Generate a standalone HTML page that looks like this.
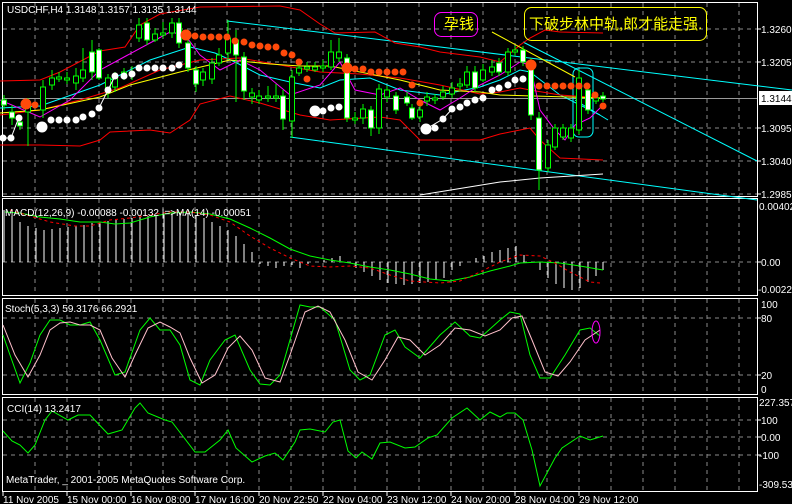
<!DOCTYPE html>
<html><head><meta charset="utf-8"><style>
html,body{margin:0;padding:0;background:#000;}
svg{display:block;}
text{font-family:"Liberation Sans","Noto Sans CJK SC",sans-serif;font-size:10px;fill:#fff;}
</style></head><body>
<svg width="792" height="504" viewBox="0 0 792 504" xmlns="http://www.w3.org/2000/svg">
<rect width="792" height="504" fill="#000"/>
<g stroke="#8a8a8a" stroke-width="1" stroke-dasharray="4,4">
<path d="M35 3V196M67 3V196M99 3V196M131 3V196M163 3V196M195 3V196M227 3V196M259 3V196M291 3V196M323 3V196M355 3V196M387 3V196M419 3V196M451 3V196M483 3V196M515 3V196M547 3V196M579 3V196M611 3V196M643 3V196M675 3V196M707 3V196M739 3V196"/>
<path d="M35 199V295M67 199V295M99 199V295M131 199V295M163 199V295M195 199V295M227 199V295M259 199V295M291 199V295M323 199V295M355 199V295M387 199V295M419 199V295M451 199V295M483 199V295M515 199V295M547 199V295M579 199V295M611 199V295M643 199V295M675 199V295M707 199V295M739 199V295"/>
<path d="M35 299V394M67 299V394M99 299V394M131 299V394M163 299V394M195 299V394M227 299V394M259 299V394M291 299V394M323 299V394M355 299V394M387 299V394M419 299V394M451 299V394M483 299V394M515 299V394M547 299V394M579 299V394M611 299V394M643 299V394M675 299V394M707 299V394M739 299V394"/>
<path d="M35 398V491M67 398V491M99 398V491M131 398V491M163 398V491M195 398V491M227 398V491M259 398V491M291 398V491M323 398V491M355 398V491M387 398V491M419 398V491M451 398V491M483 398V491M515 398V491M547 398V491M579 398V491M611 398V491M643 398V491M675 398V491M707 398V491M739 398V491"/>
<path d="M3 29H757M3 62H757M3 128H757M3 161H757M3 194H757"/>
<path d="M3 262H757M3 318H757M3 375H757M3 420H757M3 437H757M3 455H757"/>
</g>
<line x1="3" y1="98.5" x2="757" y2="98.5" stroke="#9a9a9a"/>
<g fill="none" stroke="#fff">
<rect x="2.5" y="2.5" width="755" height="194"/>
<rect x="2.5" y="198.5" width="755" height="97"/>
<rect x="2.5" y="298.5" width="755" height="96"/>
<rect x="2.5" y="397.5" width="755" height="94"/>
</g>
<g stroke="#00ffff" fill="none">
<path d="M227 21L792 90"/>
<path d="M290 137L757 200"/>
<path d="M523 42L757 161"/>
<path d="M575 100L608 120"/>
<rect x="573" y="68" width="20" height="69" rx="6"/>
<polyline points="0,108 40,106 100,85 150,60 190,47 215,53 235,62 260,75 290,82 320,88 340,80 370,78 400,90 440,95 480,87 500,80 520,70 530,72 560,95 600,115"/>
</g>
<g stroke="#ff0000" fill="none">
<polyline points="0,81 40,80 60,72 100,51 125,47 140,25 160,14 200,7 280,6 300,10 320,24 335,33 375,32 395,43 420,47 440,52 480,57 500,62 520,45 530,38 545,30 560,32 603,33"/>
<polyline points="0,115 40,110 80,100 120,88 160,70 200,60 240,58 280,65 320,72 360,74 400,78 440,85 480,94 500,92 520,88 530,90 560,95 603,98"/>
<polyline points="0,145 40,145 80,146 100,140 110,132 150,130 170,133 190,120 200,104 230,96 260,103 300,115 330,120 380,117 400,120 420,140 480,140 500,134 530,128 540,140 560,158 603,160"/>
</g>
<polyline fill="none" stroke="#ffff00" points="0,113 40,110 100,97 130,85 180,72 230,60 270,64 300,66 330,66 400,80 440,90 480,92 500,95 603,98"/>
<path d="M492 32L575 77" stroke="#ffff00"/>
<polyline fill="none" stroke="#ff00ff" points="0,100 40,117 70,100 100,70 150,43 170,32 185,35 200,55 220,70 240,60 260,70 290,95 320,85 340,62 355,90 380,95 400,88 420,100 440,110 460,98 480,85 500,75 520,62 530,65 540,110 555,130 565,140 575,125 590,118 603,105"/>
<polyline fill="none" stroke="#fff" points="420,195 500,182 540,178 603,174"/>
<g stroke="#00ff00" stroke-width="1">
<path d="M4 95V110M12 105V125M20 118V130M28 98V146M43 80V118M52 70V90M59 72V82M67 72V84M76 68V90M83 48V82M92 40V80M99 48V80M108 74V98M115 72V92M124 68V80M132 66V80M139 18V42M147 18V45M155 28V42M163 22V38M172 18V38M179 18V48M188 40V72M196 66V92M203 68V86M212 58V84M219 48V66M228 20V60M236 30V102M244 52V100M252 88V104M259 90V104M268 86V102M276 84V102M283 90V130M292 70V138M299 62V76M307 62V72M315 62V72M323 60V72M331 40V70M339 38V62M347 54V122M355 112V124M363 104V124M371 106V136M379 84V134M387 86V102M396 92V114M407 92V106M412 104V120M420 104V122M427 92V106M435 94V104M443 86V100M452 82V98M460 78V90M467 66V88M475 66V92M483 64V82M492 60V76M499 58V76M508 48V76M515 46V56M523 46V66M531 58V120M539 112V190M548 140V172M555 124V150M563 124V140M571 124V142M579 70V134M588 86V114M596 94V104M603 92V102"/>
<g fill="#000">
<rect x="25.5" y="104" width="5" height="8"/><rect x="40.5" y="87" width="5" height="23"/><rect x="49.5" y="78" width="5" height="7"/><rect x="56.5" y="77" width="5" height="2"/><rect x="64.5" y="78" width="5" height="2"/><rect x="73.5" y="76" width="5" height="7"/><rect x="80.5" y="70" width="5" height="8"/><rect x="105.5" y="78" width="5" height="14"/><rect x="112.5" y="78" width="5" height="9"/><rect x="121.5" y="72" width="5" height="2"/><rect x="136.5" y="25" width="5" height="13"/><rect x="152.5" y="34" width="5" height="6"/><rect x="160.5" y="33" width="5" height="2"/><rect x="169.5" y="23" width="5" height="10"/><rect x="200.5" y="72" width="5" height="8"/><rect x="209.5" y="63" width="5" height="16"/><rect x="216.5" y="55" width="5" height="8"/><rect x="225.5" y="38" width="5" height="15"/><rect x="249.5" y="93" width="5" height="4"/><rect x="256.5" y="96" width="5" height="4"/><rect x="265.5" y="96" width="5" height="2"/><rect x="273.5" y="96" width="5" height="2"/><rect x="289.5" y="77" width="5" height="44"/><rect x="296.5" y="68" width="5" height="5"/><rect x="304.5" y="67" width="5" height="2"/><rect x="312.5" y="67" width="5" height="3"/><rect x="320.5" y="66" width="5" height="2"/><rect x="328.5" y="52" width="5" height="15"/><rect x="336.5" y="52" width="5" height="6"/><rect x="352.5" y="118" width="5" height="2"/><rect x="360.5" y="109" width="5" height="9"/><rect x="376.5" y="89" width="5" height="39"/><rect x="384.5" y="90" width="5" height="7"/><rect x="417.5" y="110" width="5" height="7"/><rect x="424.5" y="97" width="5" height="4"/><rect x="432.5" y="98" width="5" height="2"/><rect x="440.5" y="92" width="5" height="5"/><rect x="449.5" y="88" width="5" height="6"/><rect x="457.5" y="84" width="5" height="2"/><rect x="464.5" y="72" width="5" height="13"/><rect x="480.5" y="70" width="5" height="10"/><rect x="489.5" y="67" width="5" height="5"/><rect x="505.5" y="52" width="5" height="20"/><rect x="512.5" y="50" width="5" height="2"/><rect x="545.5" y="145" width="5" height="23"/><rect x="552.5" y="128" width="5" height="19"/><rect x="560.5" y="128" width="5" height="9"/><rect x="568.5" y="128" width="5" height="10"/><rect x="576.5" y="78" width="5" height="52"/><rect x="593.5" y="98" width="5" height="3"/>
</g>
<g fill="#fff">
<rect x="1.5" y="100" width="5" height="5"/><rect x="9.5" y="112" width="5" height="6"/><rect x="17.5" y="122" width="5" height="4"/><rect x="89.5" y="52" width="5" height="20"/><rect x="96.5" y="50" width="5" height="28"/><rect x="129.5" y="72" width="5" height="2"/><rect x="144.5" y="23" width="5" height="17"/><rect x="176.5" y="23" width="5" height="20"/><rect x="185.5" y="43" width="5" height="25"/><rect x="193.5" y="70" width="5" height="14"/><rect x="233.5" y="40" width="5" height="15"/><rect x="241.5" y="57" width="5" height="34"/><rect x="280.5" y="96" width="5" height="23"/><rect x="344.5" y="58" width="5" height="60"/><rect x="368.5" y="110" width="5" height="18"/><rect x="393.5" y="96" width="5" height="14"/><rect x="404.5" y="97" width="5" height="6"/><rect x="409.5" y="108" width="5" height="10"/><rect x="472.5" y="72" width="5" height="16"/><rect x="496.5" y="63" width="5" height="9"/><rect x="520.5" y="50" width="5" height="12"/><rect x="528.5" y="62" width="5" height="53"/><rect x="536.5" y="118" width="5" height="52"/><rect x="585.5" y="90" width="5" height="20"/><rect x="600.5" y="96" width="5" height="3"/>
</g>
</g>
<g fill="#ff4a0a">
<circle cx="26" cy="104" r="5.5"/><circle cx="35" cy="105" r="3.5"/>
<circle cx="186" cy="35" r="5.5"/><circle cx="195" cy="36" r="3.5"/><circle cx="203" cy="37" r="3.5"/><circle cx="211" cy="37" r="3.5"/><circle cx="219" cy="37" r="3.5"/><circle cx="227" cy="37" r="3.5"/><circle cx="235" cy="41" r="3.5"/><circle cx="244" cy="42" r="3.5"/><circle cx="252" cy="45" r="3.5"/><circle cx="260" cy="46" r="3.5"/><circle cx="268" cy="47" r="3.5"/><circle cx="276" cy="47" r="3.5"/><circle cx="284" cy="53" r="3.5"/><circle cx="292" cy="55" r="3.5"/><circle cx="299" cy="62" r="3.5"/><circle cx="307" cy="79" r="3.5"/>
<circle cx="347" cy="68" r="5.5"/><circle cx="355" cy="69" r="3.5"/><circle cx="363" cy="69" r="3.5"/><circle cx="371" cy="72" r="3.5"/><circle cx="379" cy="72" r="3.5"/><circle cx="387" cy="72" r="3.5"/><circle cx="395" cy="72" r="3.5"/><circle cx="403" cy="72" r="3.5"/><circle cx="412" cy="85" r="3.5"/><circle cx="420" cy="103" r="3.5"/>
<circle cx="531" cy="65" r="5.5"/><circle cx="539" cy="86" r="3.5"/><circle cx="547" cy="86" r="3.5"/><circle cx="555" cy="86" r="3.5"/><circle cx="563" cy="86" r="3.5"/><circle cx="571" cy="86" r="3.5"/><circle cx="579" cy="86" r="3.5"/><circle cx="587" cy="86" r="3.5"/><circle cx="595" cy="95" r="3.5"/><circle cx="603" cy="106" r="3.5"/>
</g>
<polyline fill="none" stroke="#fff" points="3,138 11,138 19,117 20,118"/>
<g fill="#fff">
<circle cx="3" cy="138" r="3.5"/><circle cx="11" cy="138" r="3.5"/><circle cx="19" cy="118" r="3.5"/>
<circle cx="42" cy="127" r="5.5"/><circle cx="51" cy="120" r="3.5"/><circle cx="59" cy="120" r="3.5"/><circle cx="67" cy="120" r="3.5"/><circle cx="76" cy="120" r="3.5"/><circle cx="83" cy="117" r="3.5"/><circle cx="92" cy="114" r="3.5"/><circle cx="99" cy="108" r="3.5"/><circle cx="108" cy="90" r="3.5"/><circle cx="115" cy="76" r="3.5"/><circle cx="124" cy="76" r="3.5"/><circle cx="132" cy="74" r="3.5"/><circle cx="139" cy="68" r="3.5"/><circle cx="147" cy="68" r="3.5"/><circle cx="155" cy="68" r="3.5"/><circle cx="163" cy="68" r="3.5"/><circle cx="172" cy="68" r="3.5"/><circle cx="179" cy="65" r="3.5"/>
<circle cx="315" cy="111" r="5.5"/><circle cx="323" cy="111" r="3.5"/><circle cx="331" cy="108" r="3.5"/><circle cx="339" cy="107" r="3.5"/>
<circle cx="426" cy="129" r="5.5"/><circle cx="435" cy="128" r="3.5"/><circle cx="443" cy="119" r="3.5"/><circle cx="452" cy="109" r="3.5"/><circle cx="460" cy="107" r="3.5"/><circle cx="467" cy="103" r="3.5"/><circle cx="475" cy="100" r="3.5"/><circle cx="483" cy="98" r="3.5"/><circle cx="492" cy="90" r="3.5"/><circle cx="499" cy="88" r="3.5"/><circle cx="508" cy="85" r="3.5"/><circle cx="515" cy="80" r="3.5"/><circle cx="523" cy="79" r="3.5"/>
</g>
<polyline fill="none" stroke="#fff" points="99,108 108,90 115,76"/>
<polyline fill="none" stroke="#fff" points="426,129 443,119 452,109"/>
<rect x="434.5" y="12.5" width="43" height="24" rx="7" fill="none" stroke="#ff00ff"/>
<text x="444" y="29" style="font-size:15px;fill:#ffff00">孕钱</text>
<rect x="524.5" y="7.5" width="182" height="33" rx="7" fill="none" stroke="#ffff00"/>
<text x="529" y="29" style="font-size:15px;fill:#ffff00">下破步林中轨,郎才能走强.</text>
<g stroke="#fff">
<path d="M4 262V210M12 262V216M20 262V222M28 262V226M36 262V228M44 262V230M52 262V229M60 262V228M68 262V227M76 262V226M84 262V225M92 262V223M100 262V222M108 262V221M116 262V220M124 262V219M132 262V218M140 262V217M148 262V216M156 262V215M164 262V214M172 262V213M180 262V212M188 262V213M196 262V215M204 262V218M212 262V222M220 262V226M228 262V230M236 262V236M244 262V244M252 262V252M260 262V264M268 262V266M276 262V268M284 262V266M292 262V265M300 262V268M308 262V264M324 262V260M332 262V258M340 262V256M348 262V262M356 262V268M364 262V272M372 262V276M380 262V280M388 262V283M396 262V284M404 262V285M412 262V284M420 262V283M428 262V282M436 262V280M444 262V278M452 262V270M460 262V266M476 262V258M484 262V256M492 262V252M500 262V250M508 262V248M516 262V246M524 262V255M540 262V270M548 262V278M556 262V284M564 262V288M572 262V290M580 262V288M588 262V282M596 262V276M603 262V270"/>
</g>
<polyline fill="none" stroke="#00ff00" points="5,212 20,213 40,217 60,219 80,222 100,222 115,224 130,223 150,217 170,213 190,212 210,214 230,219 250,228 270,238 290,249 310,256 330,260 350,263 370,267 390,270 410,274 430,279 450,281 470,277 490,271 510,266 520,263 540,262 560,263 580,266 603,270"/>
<polyline fill="none" stroke="#ff0000" stroke-dasharray="3,3" points="10,210 30,216 50,222 75,226 90,226 110,220 130,218 150,215 170,212 190,212 210,215 230,222 250,236 270,248 290,258 310,266 330,267 350,266 370,268 390,275 410,281 440,283 460,281 480,272 500,262 520,255 540,256 555,263 570,272 590,282 600,283"/>
<polyline fill="none" stroke="#00ff00" points="3,335 10,355 20,383 30,363 40,335 50,320 60,320 70,325 80,325 90,322 100,340 115,375 125,372 140,330 150,318 160,330 170,330 180,345 190,380 200,385 210,360 225,340 235,335 250,370 260,384 270,385 280,375 300,305 310,307 320,307 335,320 350,370 360,380 370,375 385,335 395,330 405,347 420,358 440,335 455,322 470,336 480,338 500,320 510,312 520,314 530,355 540,378 550,378 565,355 580,330 590,328 600,336"/>
<polyline fill="none" stroke="#ffc0cb" points="3,325 15,355 28,377 40,355 50,330 60,323 70,322 80,325 90,325 100,330 112,358 125,377 135,355 148,328 160,322 170,327 180,333 190,358 202,383 215,375 228,348 240,336 252,350 265,378 280,382 290,355 305,312 318,306 330,312 345,340 358,372 372,380 385,360 398,337 410,340 425,355 440,345 455,328 470,330 485,336 500,330 512,318 522,316 532,340 545,372 558,376 570,362 585,340 600,330"/>
<ellipse cx="596" cy="332" rx="4" ry="11" fill="none" stroke="#ff00ff"/>
<polyline fill="none" stroke="#00ff00" points="3,431 12,441 20,445 28,453 35,445 45,420 52,411 68,420 78,415 90,415 108,434 122,430 135,408 140,403 148,413 165,420 172,422 195,452 205,452 220,440 228,430 236,448 252,462 265,456 275,453 283,460 295,442 300,430 310,429 325,432 333,422 340,420 348,451 356,458 362,452 372,459 380,443 390,442 405,448 415,447 428,438 437,435 452,418 467,408 480,420 490,412 500,417 507,413 515,413 523,420 532,450 540,486 555,458 562,448 580,436 590,440 603,436"/>
<text x="7" y="13">USDCHF,H4  1.3148 1.3157 1.3135 1.3144</text>
<text x="5" y="216">MACD(12,26,9) -0.00088 -0.00132 |=&gt;MA(14) -0.00051</text>
<text x="5" y="312">Stoch(5,3,3) 59.3176 66.2921</text>
<text x="7" y="412">CCI(14) 13.2417</text>
<text x="6" y="483">MetaTrader, _ 2001-2005 MetaQuotes Software Corp.</text>
<g>
<text x="761" y="33">1.3260</text>
<text x="761" y="66">1.3205</text>
<rect x="759" y="91" width="33" height="14" fill="#fff"/>
<text x="761" y="102" style="fill:#000">1.3144</text>
<text x="761" y="132">1.3095</text>
<text x="761" y="165">1.3040</text>
<text x="761" y="198">1.2985</text>
<text x="759" y="210">0.00402</text>
<text x="761" y="266">0.00</text>
<text x="758" y="293">-0.0022</text>
<text x="761" y="308">100</text>
<text x="761" y="322">80</text>
<text x="761" y="379">20</text>
<text x="761" y="393">0</text>
<text x="759" y="406">227.357</text>
<text x="761" y="424">100</text>
<text x="761" y="441">0.00</text>
<text x="759" y="459">-100</text>
<text x="759" y="488">-309.530</text>
</g>
<g stroke="#fff"><path d="M757 29H761M757 62H761M757 128H761M757 161H761M757 194H761M757 262H761M757 318H761M757 375H761M757 420H761M757 437H761M757 455H761"/>
<path d="M3 492V496M67 492V496M131 492V496M195 492V496M259 492V496M323 492V496M387 492V496M451 492V496M515 492V496M579 492V496"/></g>
<g>
<text x="3" y="503">11 Nov 2005</text>
<text x="67" y="503">15 Nov 00:00</text>
<text x="131" y="503">16 Nov 08:00</text>
<text x="195" y="503">17 Nov 16:00</text>
<text x="259" y="503">20 Nov 22:50</text>
<text x="323" y="503">22 Nov 04:00</text>
<text x="387" y="503">23 Nov 12:00</text>
<text x="451" y="503">24 Nov 20:00</text>
<text x="515" y="503">28 Nov 04:00</text>
<text x="579" y="503">29 Nov 12:00</text>
</g>
</svg>
</body></html>
